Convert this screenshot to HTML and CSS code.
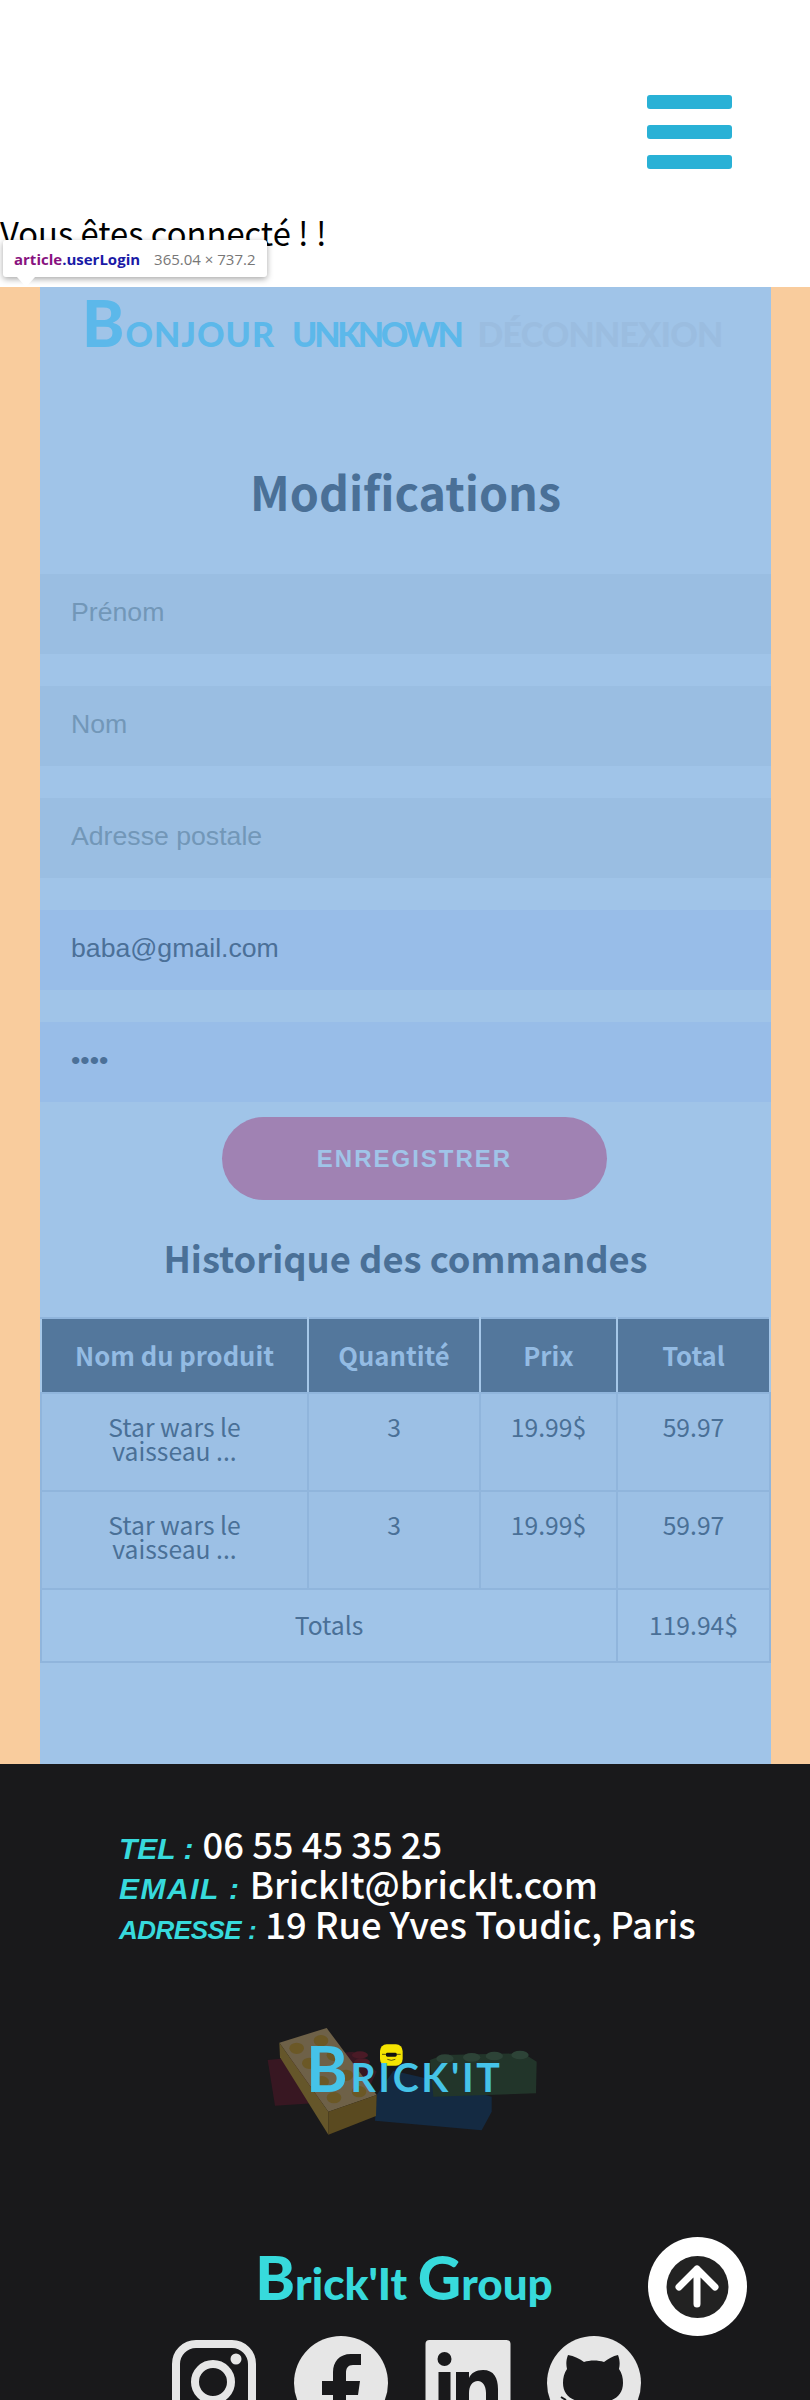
FILE: index.html
```html
<!DOCTYPE html>
<html lang="fr">
<head>
  <meta charset="UTF-8" />
  <meta name="viewport" content="width=device-width, initial-scale=1.0" />
  <title>Brick'It - Mon compte</title>
  <link rel="stylesheet" href="styles.css">
</head>
<body>
  <header class="top-bar">
    <div class="burger">
      <span></span>
      <span></span>
      <span></span>
    </div>
  </header>

  <p class="status">Vous êtes connecté ! !</p>

  <div class="inspect-tip">
    <span class="tip-tag">article</span><span class="tip-class">.userLogin</span>
    <span class="tip-size">365.04 × 737.2</span>
  </div>

  <main class="page">
    <article class="userLogin">
      <div class="greeting">
        <span class="hello">Bonjour</span>
        <span class="user-name">unknown</span>
        <a class="logout" href="#">Déconnexion</a>
      </div>

      <h2 class="title">Modifications</h2>

      <form class="edit-form">
        <input type="text" placeholder="Prénom" />
        <input type="text" placeholder="Nom" />
        <input type="text" placeholder="Adresse postale" />
        <input class="filled" type="text" value="baba@gmail.com" />
        <input class="filled" type="password" value="baba" />
        <button type="button">Enregistrer</button>
      </form>

      <h3 class="subtitle">Historique des commandes</h3>

      <table class="orders">
        <colgroup>
          <col class="col-name" />
          <col class="col-qty" />
          <col class="col-price" />
          <col class="col-total" />
        </colgroup>
        <thead>
          <tr>
            <th>Nom du produit</th>
            <th>Quantité</th>
            <th>Prix</th>
            <th>Total</th>
          </tr>
        </thead>
        <tbody>
          <tr class="item">
            <td>Star wars le<br />vaisseau ...</td>
            <td>3</td>
            <td>19.99$</td>
            <td>59.97</td>
          </tr>
          <tr class="item">
            <td>Star wars le<br />vaisseau ...</td>
            <td>3</td>
            <td>19.99$</td>
            <td>59.97</td>
          </tr>
          <tr class="sum">
            <td colspan="3">Totals</td>
            <td>119.94$</td>
          </tr>
        </tbody>
      </table>
    </article>
  </main>

  <footer class="site-footer">
    <div class="contact">
      <p><span class="label">Tel :</span> 06 55 45 35 25</p>
      <p><span class="label label-email">Email :</span> BrickIt@brickIt.com</p>
      <p><span class="label label-address">Adresse :</span> 19 Rue Yves Toudic, Paris</p>
    </div>

    <svg class="logo" viewBox="0 0 1050 480" width="350" height="160">
      <polygon points="113,180 370,155 440,215 400,300 135,317" fill="#381722" />
      <ellipse cx="390" cy="165" rx="24" ry="11" fill="#4a1a26" />
      <ellipse cx="396" cy="186" rx="24" ry="11" fill="#4a1a26" />
      <polygon points="440,285 490,212 610,240 785,290 785,335 755,391 435,362" fill="#142a42" />
      <polygon points="600,180 640,165 880,160 920,185 918,280 610,290" fill="#22352a" />
      <ellipse cx="645" cy="176" rx="26" ry="13" fill="#2d4337" />
      <ellipse cx="725" cy="172" rx="26" ry="13" fill="#2d4337" />
      <ellipse cx="793" cy="168" rx="26" ry="13" fill="#2d4337" />
      <ellipse cx="870" cy="165" rx="26" ry="13" fill="#2d4337" />
      <polygon points="148,128 290,84 440,285 295,335" fill="#6e6148" />
      <polygon points="148,128 295,335 295,404 150,172" fill="#65562a" />
      <polygon points="295,335 440,285 438,348 295,404" fill="#5a4a20" />
      <ellipse cx="200" cy="145" rx="22" ry="17" fill="#6b5826" />
      <ellipse cx="273" cy="122" rx="22" ry="17" fill="#6b5826" />
      <ellipse cx="312" cy="166" rx="22" ry="17" fill="#6b5826" />
      <ellipse cx="238" cy="190" rx="22" ry="17" fill="#6b5826" />
      <ellipse cx="275" cy="245" rx="22" ry="17" fill="#6b5826" />
      <ellipse cx="348" cy="226" rx="22" ry="17" fill="#6b5826" />
      <ellipse cx="312" cy="293" rx="22" ry="17" fill="#6b5826" />
      <ellipse cx="387" cy="275" rx="22" ry="17" fill="#6b5826" />
      <rect x="450" y="133" width="68" height="64" rx="20" fill="#f5e400" />
      <rect x="468" y="158" width="32" height="12" rx="4" fill="#111" />
      <path d="M456 163 H512 M472 178 Q484 184 496 178" stroke="#111" stroke-width="2" fill="none" />
      <text class="logo-text" x="228" y="277"><tspan class="logo-cap">B</tspan>RICK'IT</text>
    </svg>

    <h4 class="brand"><span class="brand-cap">B</span>rick'It <span class="brand-cap">G</span>roup</h4>

    <div class="socials">
      <a href="#">
        <svg viewBox="0 0 96 96" width="96" height="96">
          <rect x="10" y="9" width="76" height="78" rx="20" fill="none" stroke="#e6e6e6" stroke-width="8" />
          <circle cx="47" cy="47" r="18" fill="none" stroke="#e6e6e6" stroke-width="8" />
          <circle cx="70" cy="24" r="5.5" fill="#e6e6e6" />
        </svg>
      </a>
      <a href="#">
        <svg viewBox="0 0 96 96" width="96" height="96">
          <circle cx="48" cy="48" r="47" fill="#e6e6e6" />
          <path d="M53 96 V60 H65 L67 46 H53 V38 C53 33 55 30 60 30 H68 V19 H58 C46 19 40 27 40 37 V46 H29 V60 H40 V96 Z" fill="#19191b" />
        </svg>
      </a>
      <a href="#">
        <svg viewBox="0 0 96 96" width="96" height="96">
          <rect x="5.5" y="5" width="85" height="86" rx="4" fill="#e6e6e6" />
          <circle cx="24.5" cy="24" r="7" fill="#19191b" />
          <rect x="18.5" y="37" width="12" height="50" fill="#19191b" />
          <path d="M36 37 H49 V43 C51 38 56 35 63 35 C74 35 78 43 78 54 V87 H66 V58 C66 50 62 46 58 46 C52 46 49 51 49 58 V87 H36 Z" fill="#19191b" />
        </svg>
      </a>
      <a href="#">
        <svg viewBox="0 0 96 96" width="96" height="96">
          <circle cx="47" cy="48" r="47" fill="#e6e6e6" />
          <path d="M21 20 C27 21 33 24 37 27 C43 25 51 25 57 27 C61 24 66 21 71 20 C73 25 73 30 72 34 C75 38 76 43 76 48 C76 60 67 66 57 67 H36 C25 66 16 60 16 48 C16 43 17 38 20 34 C19 30 19 25 21 20 Z" fill="#19191b" />
          <path d="M14 62 L19 65" stroke="#19191b" stroke-width="2" />
        </svg>
      </a>
    </div>

    <a class="to-top" href="#">
      <svg viewBox="0 0 99 99" width="99" height="99">
        <circle cx="49.5" cy="49.5" r="49.5" fill="#fff" />
        <circle cx="49.5" cy="50" r="31" fill="#222" />
        <path d="M49 32 V67 M31 50 L49 32 L67 50" fill="none" stroke="#fff" stroke-width="7" stroke-linecap="round" stroke-linejoin="round" />
      </svg>
    </a>
  </footer>
</body>
</html>
```

FILE: styles.css
```css
html, body {
  margin: 0;
  height: 2400px;
  overflow: hidden;
}
body {
  position: relative;
  font-family: "Noto Sans CJK JP", "Noto Sans", sans-serif;
  background: white;
  color: black;
}
.top-bar {
  height: 95px;
  padding-top: 95px;
  display: flex;
  justify-content: flex-end;
  padding-right: 78px;
}
.burger {
  display: flex;
  flex-direction: column;
  gap: 16px;
}
.burger span {
  display: block;
  width: 85px;
  height: 14px;
  background: #29b1d6;
  border-radius: 3px;
}
.status {
  margin: 0;
  height: 97px;
  padding-top: 20px;
  font-size: 32.7px;
  line-height: 44px;
  box-sizing: border-box;
}

/* devtools tooltip over the page */
.inspect-tip {
  position: absolute;
  left: 3px;
  top: 240px;
  width: 264px;
  height: 37px;
  box-sizing: border-box;
  padding: 0 11px;
  display: flex;
  align-items: center;
  background: white;
  border-radius: 3px;
  box-shadow: 0 2px 6px rgba(0, 0, 0, 0.35);
  font-family: "Open Sans", sans-serif;
  font-size: 15px;
  white-space: pre;
}
.inspect-tip::after {
  content: "";
  position: absolute;
  left: 14px;
  top: 37px;
  border-left: 9px solid transparent;
  border-right: 9px solid transparent;
  border-top: 10px solid white;
}
.tip-tag {
  color: #881280;
  font-weight: 700;
}
.tip-class {
  color: #1a1aa6;
  font-weight: 700;
}
.tip-size {
  margin-left: 14px;
  color: #777;
}

.page {
  background: #f9cc9d;
  padding: 0 39px 0 40px;
}
.userLogin {
  height: 1477px;
  background: #a0c4e8;
  color: #4a7097;
  overflow: hidden;
}

.greeting {
  display: flex;
  align-items: baseline;
  gap: 17px;
  height: 51px;
  padding: 10px 0 0 42px;
  font-family: "Lato", sans-serif;
  font-weight: 900;
  text-transform: uppercase;
  font-size: 34px;
  line-height: 51px;
  color: #5cb8ea;
}
.hello {
  letter-spacing: 1px;
}
.hello::first-letter {
  font-size: 64px;
}
.user-name {
  letter-spacing: -3.2px;
}
.logout {
  color: #9bbde0;
  text-decoration: none;
  letter-spacing: -0.8px;
}
.title {
  margin: 105px 0 0;
  text-align: center;
  font-size: 46.6px;
  line-height: 76px;
  font-weight: 700;
}

.edit-form {
  margin-top: 45px;
  display: flex;
  flex-direction: column;
  align-items: center;
  gap: 32px;
}
.edit-form input {
  width: 100%;
  height: 80px;
  box-sizing: border-box;
  padding: 0 31px 4px;
  border: none;
  outline: none;
  background: #9abee2;
  color: #4b7098;
  font-family: "Liberation Sans", Arial, sans-serif;
  font-size: 26.67px;
}
.edit-form input::placeholder {
  color: #7297b8;
  opacity: 1;
}
.edit-form input.filled {
  background: #98bde8;
}
.edit-form button {
  width: 385px;
  height: 83px;
  margin: -17px 0 0 18px;
  border: none;
  border-radius: 42px;
  background: #a082b3;
  color: #a0c4e8;
  font-family: "Liberation Sans", Arial, sans-serif;
  font-weight: 700;
  font-size: 24px;
  letter-spacing: 2px;
  text-transform: uppercase;
}

.subtitle {
  margin: 21px 0 0;
  text-align: center;
  font-size: 36.3px;
  line-height: 72px;
  font-weight: 700;
}

.orders {
  margin: 24px 0 0 0;
  width: 729px;
  table-layout: fixed;
  border-collapse: collapse;
  font-size: 24.7px;
  text-align: center;
}
.col-name { width: 267px; }
.col-qty { width: 172px; }
.col-price { width: 137px; }
.col-total { width: 153px; }
.orders th {
  height: 75px;
  padding: 0 0 2px;
  box-sizing: border-box;
  background: #53779c;
  color: #93bbe3;
  border: 2px solid #90b5dc;
  border-left-color: #a5c7e8;
  border-right-color: #a5c7e8;
  font-size: 25.6px;
  font-weight: 700;
}
.orders td {
  padding: 0;
  border: 2px solid #90b5dc;
  line-height: 24px;
}
.item td {
  height: 98px;
  padding-top: 20px;
  box-sizing: border-box;
  vertical-align: top;
  background: #9cc0e5;
}
.sum td {
  height: 73px;
  padding-bottom: 4px;
  box-sizing: border-box;
}

.site-footer {
  position: relative;
  height: 636px;
  box-sizing: border-box;
  padding-top: 59px;
  background: #19191b;
  color: white;
  overflow: hidden;
}
.contact {
  padding-left: 119px;
  font-size: 36.3px;
  font-weight: 500;
  line-height: 40px;
}
.contact p {
  margin: 0;
  height: 40px;
}
.label {
  font-family: "Liberation Sans", sans-serif;
  font-style: italic;
  font-weight: 700;
  font-size: 30px;
  line-height: 0;
  text-transform: uppercase;
  color: #37dadc;
  margin-right: 1px;
}
.label-email {
  letter-spacing: 1.5px;
}
.label-address {
  font-size: 26px;
  letter-spacing: -0.5px;
}
.logo {
  display: block;
  margin: 57px auto 0;
}
.logo-text {
  font-family: "Lato", sans-serif;
  font-size: 118px;
  font-weight: 700;
  letter-spacing: 8px;
  fill: #45c3e8;
}
.logo-cap {
  font-size: 190px;
}
.brand {
  margin: 93px 2px 0 0;
  height: 60px;
  text-align: center;
  font-family: "Lato", sans-serif;
  font-weight: 900;
  font-size: 44px;
  line-height: 60px;
  color: #37dadc;
}
.brand-cap {
  font-size: 60px;
  line-height: 0;
}
.socials {
  margin: 22px 0 0 -1px;
  display: flex;
  justify-content: center;
  gap: 31px;
}
.socials a {
  display: block;
  height: 96px;
}
.socials svg,
.to-top svg {
  display: block;
}
.to-top {
  position: absolute;
  left: 648px;
  top: 473px;
}
```
